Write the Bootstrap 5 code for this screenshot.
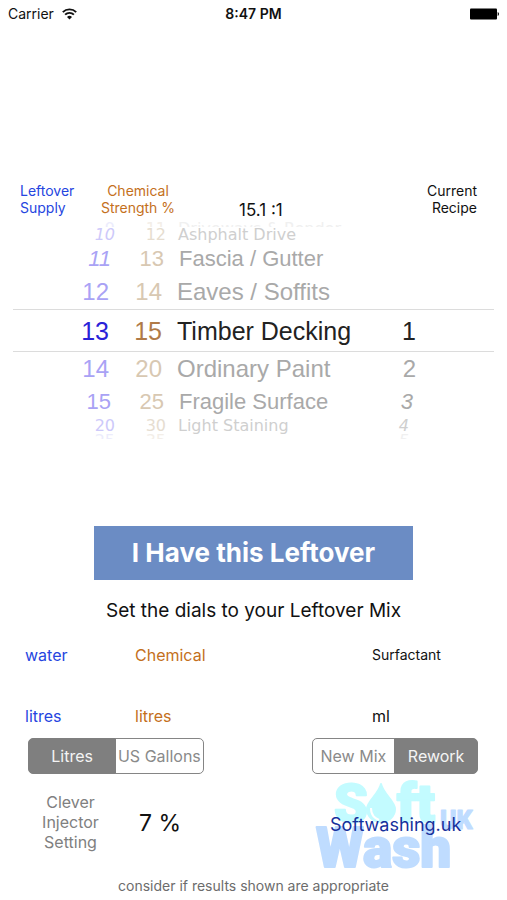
<!DOCTYPE html>
<html lang="en">
<head>
<meta charset="utf-8">
<meta name="viewport" content="width=device-width, initial-scale=1">
<title>Softwashing mix calculator</title>
<link href="https://cdn.jsdelivr.net/npm/bootstrap@5.3.0/dist/css/bootstrap.min.css" rel="stylesheet">
<style>
body{font-family:Inter,"Liberation Sans",sans-serif;font-size:16px;line-height:20px;color:#111;background:#fff}
.statusbar{font-size:14px;padding:4px 8px 0}
.statusbar>*{flex:1 1 0}
.tint-water{color:#2545e0}
.tint-chem{color:#c4701c}
.heads{font-size:14px;line-height:17px;padding:158px 30px 0 20px}
.heads .h-supply{flex:0 0 76px}
.heads .h-strength{flex:0 0 84px}
.heads .h-ratio{font-size:17px;line-height:20px;padding-left:59px}
.wheel{margin:2px 13px 0;font-family:"Liberation Sans",Arial,sans-serif;color:#a9a9a9}
.turn{display:grid;grid-template-columns:96fr 53fr 191fr 63fr 78fr;align-items:center;white-space:nowrap}
.turn>*{text-align:right}
.turn>:nth-child(1){color:#a9a2f5}
.turn>:nth-child(2){color:#d8c8b2}
.turn>:nth-child(3){text-align:left;padding-left:15px}
.turn.near{font-size:24px;line-height:28px;height:34px}
.turn.mid{font-size:22px;line-height:24px;height:32px;grid-template-columns:98fr 53fr 188fr 61fr 81fr}
.turn.far,.turn.edge{font-family:"DejaVu Sans",sans-serif;grid-template-columns:102fr 51fr 186fr 57fr 85fr}
.turn.far>:nth-child(3),.turn.edge>:nth-child(3){padding-left:12px}
.turn.far{font-size:16px;line-height:16px;height:16px;color:#cfcfcf}
.turn.far>:nth-child(1){color:#cdc9fa}
.turn.far>:nth-child(2){color:#e6ddd0}
.turn.edge{font-size:16px;line-height:14px;height:5px;overflow:hidden;color:#f0f0f0}
.turn.edge>:nth-child(1){color:#ececfc}
.turn.edge>:nth-child(2){color:#f3eee8}
.turn.current{font-size:25px;line-height:28px;height:43px;color:#222;border-top:1px solid #dcdcdc;border-bottom:1px solid #dcdcdc}
.turn.current>:nth-child(1){color:#2a22d8}
.turn.current>:nth-child(2){color:#b07a48}
.btn-leftover{--bs-btn-color:#fff;--bs-btn-bg:#6b8cc4;--bs-btn-hover-color:#fff;--bs-btn-hover-bg:#5a7cb6;width:63%;height:54px;margin-top:87px;font-size:26px;font-weight:700;line-height:32px}
.hint{font-size:19px;line-height:24px;margin:19px 0 22px}
.amounts{padding:0 25px;display:grid;grid-template-columns:110fr 237fr 110fr;row-gap:41px}
.amounts .surf{font-size:14px}
.switches{padding:12px 29px 0 28px}
.btn-group>.seg{--bs-btn-padding-x:0;--bs-btn-padding-y:0;--bs-btn-font-size:16px;--bs-btn-color:#8a8a8a;--bs-btn-border-color:#858585;--bs-btn-border-radius:5px;--bs-btn-active-bg:#7f7f7f;--bs-btn-active-color:#f4f4f4;--bs-btn-active-border-color:#7f7f7f;--bs-btn-hover-color:#666;--bs-btn-hover-border-color:#858585;flex:1 1 0;height:36px;line-height:34px;white-space:nowrap}
.seg-volume{width:39%}
.seg-mode{width:37%}
.bottom{padding:5px 29px 0 40px}
.injector{width:61px;color:#808080;padding-bottom:6px}
.percent{font-size:23px;line-height:28px;margin-left:38px;padding-bottom:4px}
.logo{width:164px;height:92px}
.logo svg{display:block;width:100%;height:100%}
.site{position:absolute;left:16px;top:35px;font-size:18px;line-height:22px;color:#16309c}
.foot{font-size:14px;line-height:16px;color:#6c6c6c;margin:7px 0 0}
</style>
<script src="https://cdn.jsdelivr.net/npm/bootstrap@5.3.0/dist/js/bootstrap.bundle.min.js"></script>
</head>
<body>
<header class="statusbar d-flex align-items-center">
  <div class="d-flex align-items-center gap-2"><span>Carrier</span>
    <svg width="15" height="12" viewBox="0 0 15 12" fill="none" stroke="#111" stroke-width="1.9" aria-hidden="true"><path d="M.8 4.1a9.6 9.6 0 0 1 13.4 0M3.1 6.7a6.2 6.2 0 0 1 8.8 0"/><path d="M7.5 11.6 5 9a3.5 3.5 0 0 1 5 0z" fill="#111" stroke="none"/></svg>
  </div>
  <div class="text-center fw-semibold">8:47 PM</div>
  <div class="d-flex justify-content-end"><svg width="30" height="12" viewBox="0 0 30 12" aria-hidden="true"><rect x="1" y=".5" width="27" height="11" rx="1"/><path d="M28.7 4a2.2 2.2 0 0 1 0 4z"/></svg></div>
</header>
<main>
  <div class="heads d-flex align-items-start">
    <div class="h-supply tint-water">Leftover<br>Supply</div>
    <div class="h-strength tint-chem text-center text-nowrap">Chemical<br>Strength %</div>
    <div class="h-ratio flex-fill align-self-end">15.1 :1</div>
    <div class="text-end pb-1">Current<br>Recipe</div>
  </div>
  <div class="wheel">
    <div class="turn edge"><span>9</span><span>11</span><span>Driveways &amp; Render</span><span></span></div>
    <div class="turn far"><i>10</i><span>12</span><span>Ashphalt Drive</span><span></span></div>
    <div class="turn mid"><i>11</i><span>13</span><span>Fascia / Gutter</span><span></span></div>
    <div class="turn near"><span>12</span><span>14</span><span>Eaves / Soffits</span><span></span></div>
    <div class="turn current"><span>13</span><span>15</span><span>Timber Decking</span><span>1</span></div>
    <div class="turn near"><span>14</span><span>20</span><span>Ordinary Paint</span><span>2</span></div>
    <div class="turn mid"><span>15</span><span>25</span><span>Fragile Surface</span><i>3</i></div>
    <div class="turn far"><span>20</span><span>30</span><span>Light Staining</span><i>4</i></div>
    <div class="turn edge"><span>25</span><span>35</span><span></span><i>5</i></div>
  </div>
  <div class="text-center">
    <button type="button" class="btn btn-leftover rounded-0 border-0 p-0">I Have this Leftover</button>
    <p class="hint">Set the dials to your Leftover Mix</p>
  </div>
  <div class="amounts">
    <span class="tint-water">water</span><span class="tint-chem">Chemical</span><span class="surf">Surfactant</span>
    <span class="tint-water">litres</span><span class="tint-chem">litres</span><span>ml</span>
  </div>
  <div class="switches d-flex justify-content-between">
    <div class="btn-group seg-volume" role="group" aria-label="Volume unit">
      <input type="radio" class="btn-check" name="volume" id="v-l" checked><label class="btn seg" for="v-l">Litres</label>
      <input type="radio" class="btn-check" name="volume" id="v-g"><label class="btn seg" for="v-g">US Gallons</label>
    </div>
    <div class="btn-group seg-mode" role="group" aria-label="Mix mode">
      <input type="radio" class="btn-check" name="mode" id="m-n"><label class="btn seg" for="m-n">New Mix</label>
      <input type="radio" class="btn-check" name="mode" id="m-r" checked><label class="btn seg" for="m-r">Rework</label>
    </div>
  </div>
  <div class="bottom d-flex align-items-center">
    <div class="injector text-center">Clever Injector Setting</div>
    <div class="percent">7 %</div>
    <div class="logo position-relative ms-auto">
      <svg viewBox="0 0 164 92" font-family="Roboto, sans-serif" font-weight="900" stroke-width="2" stroke-linejoin="round" aria-hidden="true">
        <g fill="#c3fbff" stroke="#c3fbff"><text x="20" y="43" font-size="54">S</text><text x="83" y="43" font-size="54">ft</text><path d="M67 5c2 10 14 17 14 25a14 13 0 0 1-28 0C53 22 65 15 67 5z"/></g>
        <path d="M57 29c0 8 4 10 8 12" fill="none" stroke="#fff"/>
        <g fill="#bfdcff" stroke="#bfdcff"><text x="2" y="88" font-size="55">Wash</text><text x="126" y="50" font-size="25" stroke-width="1">UK</text></g>
      </svg>
      <a class="site text-decoration-none" href="#">Softwashing.uk</a>
    </div>
  </div>
  <p class="foot text-center">consider if results shown are appropriate</p>
</main>
</body>
</html>
